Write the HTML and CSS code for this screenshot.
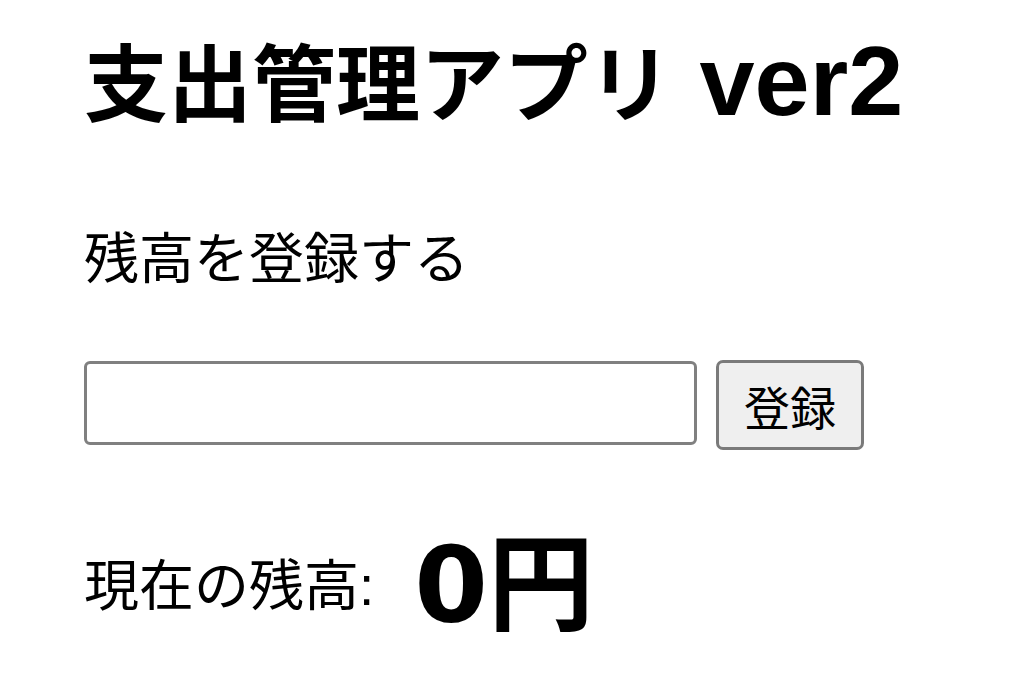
FILE: index.html
```html
<!DOCTYPE html>
<html lang="ja">
<head>
<meta charset="utf-8">
<title>支出管理アプリ ver2</title>
<link rel="stylesheet" href="styles.css">
</head>
<body>
<main class="app">
  <h1 class="title">支出管理アプリ<span class="ver"> ver2</span></h1>
  <p class="label">残高を登録する</p>
  <form class="form">
    <input class="input" type="text">
    <button class="btn" type="button">登録</button>
  </form>
  <div class="balance">
    <span class="balance-label">現在の残高:</span>
    <span class="balance-value">0円</span>
  </div>
</main>
</body>
</html>
```
FILE: styles.css
```css
html, body {
  margin: 0;
  padding: 0;
  background: #fff;
}
body {
  font-family: "Liberation Sans", "Noto Sans CJK JP", sans-serif;
  color: #000;
}
.app {
  padding: 31px 0 0 84px;
  display: flex;
  flex-direction: column;
  align-items: flex-start;
}
.title {
  margin: 0;
  font-family: "Noto Sans CJK JP", sans-serif;
  font-size: 84px;
  line-height: 96px;
  font-weight: bold;
}
.ver {
  font-family: "Liberation Sans", sans-serif;
  font-size: 99px;
  line-height: 80px;
}
.label {
  margin: 100px 0 0 0;
  font-size: 55px;
  line-height: 64px;
}
.form {
  margin: 69px 0 0 0;
  display: flex;
  align-items: flex-start;
  gap: 19px;
}
.input {
  margin-top: 1px;
  width: 613px;
  height: 84px;
  box-sizing: border-box;
  border: 3px solid #808080;
  border-radius: 6px;
  background: #fff;
  font-size: 40px;
  padding: 0 8px;
}
.btn {
  width: 148px;
  height: 90px;
  box-sizing: border-box;
  border: 3px solid #7a7a7a;
  border-radius: 7px;
  background: #efefef;
  font-family: "Liberation Sans", "Noto Sans CJK JP", sans-serif;
  font-size: 46px;
  color: #000;
  padding: 0;
}
.balance {
  margin: 76px 0 0 0;
  display: flex;
  align-items: center;
  gap: 40px;
}
.balance-label {
  font-size: 55px;
  line-height: 64px;
}
.balance-value {
  font-family: "DejaVu Sans", "Noto Sans CJK JP", sans-serif;
  font-size: 106px;
  line-height: 120px;
  font-weight: bold;
}
```
